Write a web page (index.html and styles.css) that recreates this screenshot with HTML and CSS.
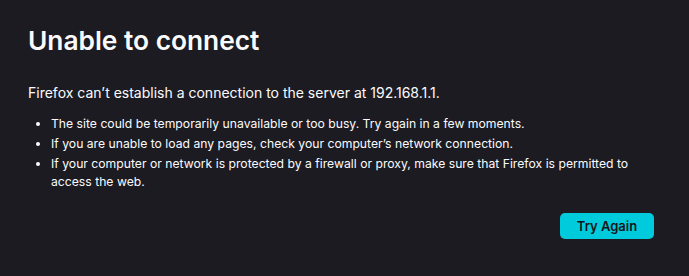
FILE: index.html
```html
<!DOCTYPE html>
<html>
<head>
<meta charset="utf-8">
<link rel="stylesheet" href="styles.css">
</head>
<body>
<main class="container">
  <h1 class="title">Unable to connect</h1>
  <p class="desc">Firefox can’t establish a connection to the server at 192.168.1.1.</p>
  <ul class="list">
    <li>The site could be temporarily unavailable or too busy. Try again in a few moments.</li>
    <li>If you are unable to load any pages, check your computer’s network connection.</li>
    <li>If your computer or network is protected by a firewall or proxy, make sure that Firefox is permitted to access the web.</li>
  </ul>
  <div class="actions">
    <button class="btn">Try Again</button>
  </div>
</main>
</body>
</html>
```
FILE: styles.css
```css
html, body {
  margin: 0;
  padding: 0;
  background: #1c1b22;
  color: #fbfbfe;
  font-family: Inter, "Noto Sans", sans-serif;
}
.container {
  padding: 24px 35px 0 28px;
}
.title {
  margin: 0;
  font-size: 26.3px;
  font-weight: 600;
  line-height: 34px;
}
.desc {
  margin: 24px 0 0;
  font-size: 14px;
  line-height: 22px;
}
.list {
  margin: 11px 0 0;
  padding-left: 23px;
  font-size: 12.2px;
  line-height: 17.5px;
}
.list li {
  margin: 0 0 2.5px;
}
.actions {
  display: flex;
  justify-content: flex-end;
  margin-top: 23px;
}
.btn {
  background: #00cbdc;
  color: #15141a;
  border: none;
  border-radius: 5px;
  font-family: Inter, sans-serif;
  font-size: 13px;
  font-weight: 600;
  width: 94px;
  height: 26px;
  padding: 0;
}
```
